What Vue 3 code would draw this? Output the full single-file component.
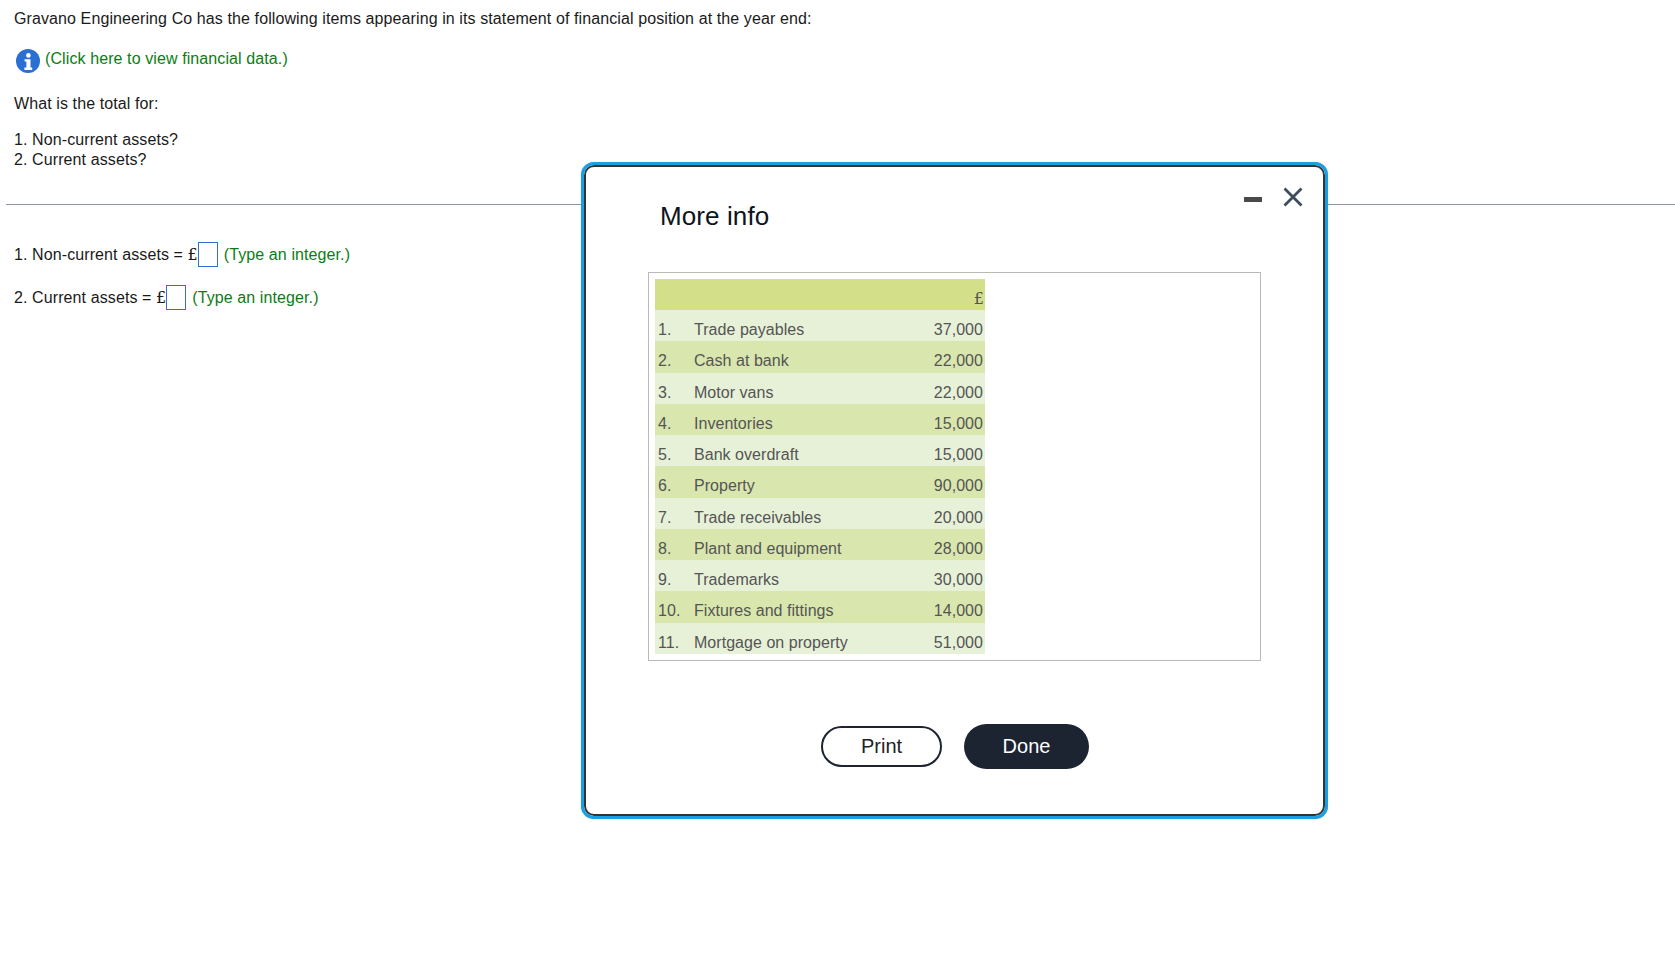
<script setup>
const rows = [
  ['1.', 'Trade payables', '37,000'],
  ['2.', 'Cash at bank', '22,000'],
  ['3.', 'Motor vans', '22,000'],
  ['4.', 'Inventories', '15,000'],
  ['5.', 'Bank overdraft', '15,000'],
  ['6.', 'Property', '90,000'],
  ['7.', 'Trade receivables', '20,000'],
  ['8.', 'Plant and equipment', '28,000'],
  ['9.', 'Trademarks', '30,000'],
  ['10.', 'Fixtures and fittings', '14,000'],
  ['11.', 'Mortgage on property', '51,000'],
]
</script>

<template>
  <div class="page">
    <section class="question">
      <p class="line">Gravano Engineering Co has the following items appearing in its statement of financial position at the year end:</p>
      <div class="link-row">
        <svg class="info" viewBox="0 0 24 24" aria-hidden="true">
          <circle cx="12" cy="12" r="12" fill="#2a6fd2" />
          <circle cx="12.4" cy="6.4" r="2.3" fill="#fff" />
          <path d="M8.6 10.2h5.9v8.3h1.7v2.4H8.4v-2.4h2v-5.9h-1.8z" fill="#fff" />
        </svg>
        <span class="green link-text">(Click here to view financial data.)</span>
      </div>
      <p class="line what">What is the total for:</p>
      <p class="line list">1. Non-current assets?<br />2. Current assets?</p>
    </section>

    <div class="divider"></div>

    <section class="answers">
      <div class="answer first">
        <span>1. Non-current assets = <span class="pound">£</span></span>
        <input class="box" type="text" />
        <span class="green">(Type an integer.)</span>
      </div>
      <div class="answer second">
        <span>2. Current assets = <span class="pound">£</span></span>
        <input class="box" type="text" />
        <span class="green">(Type an integer.)</span>
      </div>
    </section>

    <div class="modal">
      <div class="controls">
        <span class="minimize"></span>
        <svg class="close" viewBox="0 0 20 20" aria-hidden="true">
          <path d="M1.5 1.5l17 17M18.5 1.5l-17 17" stroke="#3d4d5c" stroke-width="2.8" fill="none" />
        </svg>
      </div>
      <h2 class="title">More info</h2>
      <div class="frame">
        <div class="sheet">
          <div class="head"><span class="pound">£</span></div>
          <div v-for="(r, i) in rows" :key="r[0]" class="row" :class="i % 2 ? 'dark' : 'light'">
            <span class="num">{{ r[0] }}</span>
            <span class="label">{{ r[1] }}</span>
            <span class="amount">{{ r[2] }}</span>
          </div>
        </div>
      </div>
      <div class="buttons">
        <button class="btn print" type="button">Print</button>
        <button class="btn done" type="button">Done</button>
      </div>
    </div>
  </div>
</template>

<style scoped>
.page {
  position: relative;
  width: 1675px;
  height: 955px;
  overflow: hidden;
  background: #fff;
  color: #1a1a1a;
  font-family: "Liberation Sans", Arial, sans-serif;
  font-size: 16px;
  line-height: 20px;
}
.question {
  padding: 9px 0 0 14px;
  letter-spacing: 0.1px;
}
.line { margin: 0; }
.link-row {
  display: flex;
  align-items: flex-start;
  margin: 20px 0 0 2px;
  height: 24px;
}
.info { width: 24px; height: 24px; flex: none; }
.link-text { margin: 0 0 0 5px; }
.green { color: #0a7d14; }
.what { margin-top: 21px; }
.list { margin-top: 16px; }
.divider {
  height: 1px;
  margin: 34px 0 0 6px;
  background: #8d95a5;
}
.answers {
  padding-left: 14px;
  letter-spacing: 0.1px;
}
.answer { display: flex; align-items: center; height: 25px; }
.first { margin-top: 37px; }
.second { margin-top: 18px; }
.pound { font-family: "DejaVu Serif", "Liberation Serif", serif; font-size: 16px; letter-spacing: 0; }
.box {
  box-sizing: border-box;
  width: 20px;
  height: 25px;
  margin: 0 6px 0 0;
  padding: 0;
  border: 1px solid #3a6fc8;
  background: #fff;
  outline: none;
}
.modal {
  position: absolute;
  left: 581px;
  top: 162px;
  box-sizing: border-box;
  width: 747px;
  height: 657px;
  border: 3px solid #1b9fe0;
  border-radius: 13px;
  box-shadow: inset 0 0 0 2px #333, 0 0 1px #6cc4ee;
  background: #fff;
}
.controls {
  position: absolute;
  top: 22px;
  right: 22px;
  display: flex;
  align-items: center;
  gap: 21px;
}
.minimize {
  width: 18px;
  height: 5px;
  background: #4a4a4a;
  margin-top: 5px;
}
.close { width: 20px; height: 20px; display: block; }
.title {
  margin: 0 0 0 76px;
  padding-top: 36px;
  font-size: 26px;
  line-height: 30px;
  letter-spacing: 0.1px;
  font-weight: 400;
  color: #0d1420;
}
.frame {
  box-sizing: border-box;
  width: 613px;
  height: 389px;
  margin: 41px 0 0 64px;
  padding: 6px;
  border: 1px solid #b9b9b9;
}
.sheet { width: 330px; color: #555; letter-spacing: 0.04px; }
.head {
  height: 31px;
  background: #d4e089;
  box-sizing: border-box;
  padding: 10px 1px 0 0;
  text-align: right;
}
.row {
  display: flex;
  height: 31.27px;
  box-sizing: border-box;
  padding: 10px 2px 0 3px;
}
.light { background: #e7f1d8; }
.dark { background: #d9e6ad; }
.num { width: 36px; flex: none; }
.label { flex: 1; }
.amount { text-align: right; }
.buttons {
  display: flex;
  align-items: center;
  justify-content: center;
  gap: 22px;
  margin-top: 63px;
  height: 45px;
}
.btn {
  box-sizing: border-box;
  font-family: inherit;
  font-size: 20px;
  line-height: 24px;
  border-radius: 23px;
  padding: 0 0 2px 1px;
}
.print {
  width: 121px;
  height: 41px;
  background: #fff;
  border: 2px solid #1c2331;
  color: #222;
}
.done {
  width: 125px;
  height: 45px;
  background: #1c2331;
  border: 0;
  color: #fff;
}
</style>
